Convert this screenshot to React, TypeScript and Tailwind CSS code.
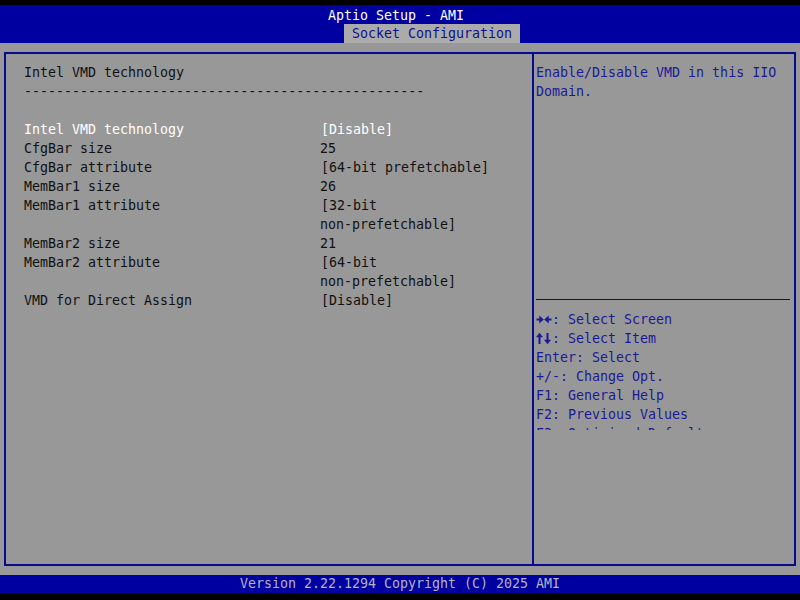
import React from "react";

const mono = "font-['DejaVu_Sans_Mono','Liberation_Mono',monospace] text-[13.3px] leading-[19px]";

const rows: { label: string; value: string[]; selected?: boolean }[] = [
  { label: "Intel VMD technology", value: ["[Disable]"], selected: true },
  { label: "CfgBar size", value: ["25"] },
  { label: "CfgBar attribute", value: ["[64-bit prefetchable]"] },
  { label: "MemBar1 size", value: ["26"] },
  { label: "MemBar1 attribute", value: ["[32-bit", "non-prefetchable]"] },
  { label: "MemBar2 size", value: ["21"] },
  { label: "MemBar2 attribute", value: ["[64-bit", "non-prefetchable]"] },
  { label: "VMD for Direct Assign", value: ["[Disable]"] },
];

// two-glyph arrow keys, drawn the way the bios font renders them
function LeftRight() {
  return (
    <svg width="16" height="19" viewBox="0 0 16 19" className="inline-block align-top" fill="currentColor" stroke="currentColor">
      <line x1="0.5" y1="9.5" x2="5" y2="9.5" strokeWidth="2" />
      <polygon points="3.5,6 7.5,9.5 3.5,13" strokeWidth="0.5" />
      <polygon points="12.5,6 8.5,9.5 12.5,13" strokeWidth="0.5" />
      <line x1="11" y1="9.5" x2="15.5" y2="9.5" strokeWidth="2" />
    </svg>
  );
}

function UpDown() {
  return (
    <svg width="16" height="19" viewBox="0 0 16 19" className="inline-block align-top" fill="currentColor" stroke="currentColor">
      <polygon points="0.5,8 3.5,4 6.5,8" strokeWidth="0.5" />
      <line x1="3.5" y1="7" x2="3.5" y2="15" strokeWidth="2" />
      <line x1="11.5" y1="4" x2="11.5" y2="12" strokeWidth="2" />
      <polygon points="8.5,11 11.5,15 14.5,11" strokeWidth="0.5" />
    </svg>
  );
}

const help: { key: React.ReactNode; text: string }[] = [
  { key: <LeftRight />, text: ": Select Screen" },
  { key: <UpDown />, text: ": Select Item" },
  { key: "Enter", text: ": Select" },
  { key: "+/-", text: ": Change Opt." },
  { key: "F1", text: ": General Help" },
  { key: "F2", text: ": Previous Values" },
  { key: "F3", text: ": Optimized Defaults" },
];

export default function App() {
  return (
    <div className={`w-[800px] h-[600px] bg-black flex flex-col ${mono}`}>
      {/* header */}
      <div className="mt-[5px] h-[38px] bg-[#0000a0] flex flex-col">
        <div className="h-[19px] pt-px flex justify-center pr-[8px] text-white">Aptio Setup - AMI</div>
        <div className="h-[19px] flex pl-[344px]">
          <div className="bg-[#ababab] px-[8px] text-[#10108c]">Socket Configuration</div>
        </div>
      </div>

      {/* body */}
      <div className="h-[532px] bg-[#989898] px-[4px] pt-[9px]">
        <div className="h-[514px] border-2 border-[#0a0a90] flex">
          {/* left panel */}
          <div className="w-[526px] pl-[18px] pt-[9px] text-[#111111]">
            <div>Intel VMD technology</div>
            <div>--------------------------------------------------</div>
            <div className="h-[19px]" />
            {rows.map((r, i) => (
              <div key={i} className="flex">
                <div className={`w-[296px] ${r.selected ? "text-white" : ""}`}>{r.label}</div>
                <div className={r.selected ? "text-white" : ""}>
                  {r.value.map((v, j) => (
                    <div key={j} className={v.startsWith("[") ? "pl-px" : ""}>{v}</div>
                  ))}
                </div>
              </div>
            ))}
          </div>

          {/* right panel */}
          <div className="flex-1 border-l-2 border-[#0a0a90] px-[2px] text-[#1a1a96] flex flex-col">
            <div className="h-[245px] pt-[9px]">
              <div>Enable/Disable VMD in this IIO</div>
              <div>Domain.</div>
            </div>
            <div className="h-px bg-[#0a0a90] mr-[2px]" />
            <div className="mt-[10px] h-[120px] overflow-hidden">
              {help.map((h, i) => (
                <div key={i} className="h-[19px]">
                  {h.key}
                  {h.text}
                </div>
              ))}
            </div>
          </div>
        </div>
      </div>

      {/* footer */}
      <div className="h-[18px] bg-[#0000a0] flex justify-center items-center text-[#b4b4c4] leading-[18px]">
        Version 2.22.1294 Copyright (C) 2025 AMI
      </div>
    </div>
  );
}
